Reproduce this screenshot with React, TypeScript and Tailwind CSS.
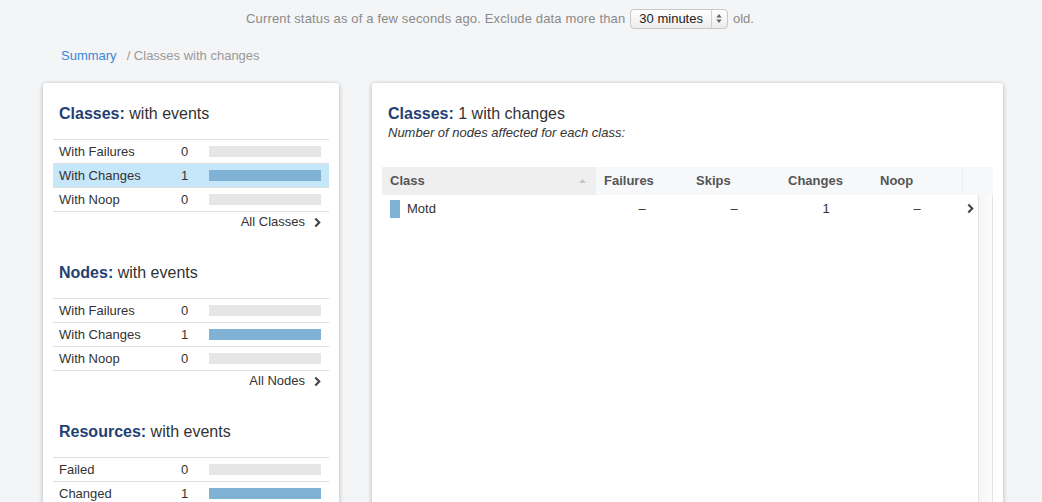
const font = { fontFamily: '"Liberation Sans", Arial, sans-serif' };

type Row = { label: string; count: number; active?: boolean };

const sections: { title: string; rows: Row[]; link?: string }[] = [
  {
    title: "Classes:",
    rows: [
      { label: "With Failures", count: 0 },
      { label: "With Changes", count: 1, active: true },
      { label: "With Noop", count: 0 },
    ],
    link: "All Classes",
  },
  {
    title: "Nodes:",
    rows: [
      { label: "With Failures", count: 0 },
      { label: "With Changes", count: 1 },
      { label: "With Noop", count: 0 },
    ],
    link: "All Nodes",
  },
  {
    title: "Resources:",
    rows: [
      { label: "Failed", count: 0 },
      { label: "Changed", count: 1 },
      { label: "Noop", count: 0 },
    ],
    link: "All Resources",
  },
];

function SummaryTable({ rows }: { rows: Row[] }) {
  return (
    <div className="mx-[10px] mt-[14px] border-b border-[#dedede]">
      {rows.map((row) => (
        <div
          key={row.label}
          className={`flex h-[24px] items-center border-t border-[#dedede] text-[13px] text-[#333] ${
            row.active ? "bg-[#c6e6f9]" : ""
          }`}
        >
          <span className="w-[128px] pl-[6px]">{row.label}</span>
          <span className="w-[28px]">{row.count}</span>
          <span
            className={`h-[11px] w-[112px] ${row.count > 0 ? "bg-[#7fb2d4]" : "bg-[#e6e6e6]"}`}
          />
        </div>
      ))}
    </div>
  );
}

function Chevron({ className }: { className?: string }) {
  return (
    <svg viewBox="0 0 8 12" className={className} fill="none">
      <path d="M1.5 1.5 6 6l-4.5 4.5" stroke="#444" strokeWidth="2.4" />
    </svg>
  );
}

export default function App() {
  const cols = ["Failures", "Skips", "Changes", "Noop"];
  const values = ["–", "–", "1", "–"];

  return (
    <div className="h-[502px] w-[1042px] overflow-hidden bg-[#f4f5f7]" style={font}>
      <div className="flex h-[37px] items-center justify-center pr-[42px] text-[13px] text-[#8a8a8a]">
        <span className="tracking-[0.15px]">
          Current status as of a few seconds ago. Exclude data more than
        </span>
        <span className="mx-[5px] flex h-[20px] items-center rounded-[4px] border border-[#c8c8c8] bg-gradient-to-b from-white to-[#ececec] text-[#222]">
          <span className="px-[8px]">30 minutes</span>
          <span className="flex h-full w-[16px] items-center justify-center border-l border-[#d0d0d0]">
            <svg viewBox="0 0 6 10" className="h-[9px] w-[6px]">
              <path d="M3 0 6 4H0z M3 10 0 6h6z" fill="#666" />
            </svg>
          </span>
        </span>
        <span>old.</span>
      </div>

      <div className="flex h-[37px] items-center pl-[61px] text-[13px]">
        <span className="text-[#3a86d3]">Summary</span>
        <span className="ml-[10px] text-[#999]">/ Classes with changes</span>
      </div>

      <div className="mt-[9px] flex gap-[33px] pl-[43px]">
        <div className="h-[600px] w-[296px] rounded-[3px] bg-white pt-[20px] shadow-[0_1px_5px_rgba(0,0,0,0.28)]">
          {sections.map((s, i) => (
            <div key={s.title} className={i > 0 ? "mt-[30px]" : ""}>
              <div className="px-[16px] text-[16px] leading-[22px] text-[#333]">
                <span className="font-bold text-[#243f74]">{s.title}</span> with events
              </div>
              <SummaryTable rows={s.rows} />
              <div className="flex h-[20px] items-center justify-end pr-[18px] text-[13px] text-[#333]">
                {s.link}
                <Chevron className="ml-[9px] h-[11px] w-[7px]" />
              </div>
            </div>
          ))}
        </div>

        <div className="h-[600px] w-[631px] rounded-[3px] bg-white pt-[21px] shadow-[0_1px_5px_rgba(0,0,0,0.28)]">
          <div className="px-[16px] text-[16px] leading-[20px] text-[#333]">
            <span className="font-bold text-[#243f74]">Classes:</span> 1 with changes
          </div>
          <div className="px-[16px] text-[13px] italic leading-[18px] text-[#333]">
            Number of nodes affected for each class:
          </div>

          <div className="mx-[10px] mt-[25px] w-[611px]">
            <div className="flex h-[28px] items-center text-[13px] font-bold text-[#555]">
              <div className="flex h-full w-[214px] items-center justify-between bg-[#efefef] pl-[8px] pr-[10px]">
                Class
                <svg viewBox="0 0 8 5" className="h-[4px] w-[7px]">
                  <path d="M4 0 8 5H0z" fill="#c4c4c4" />
                </svg>
              </div>
              {cols.map((c, i) => (
                <div
                  key={c}
                  className={`flex h-full items-center bg-[#f7f8fa] pl-[8px] ${i === 3 ? "w-[90px]" : "w-[92px]"}`}
                >
                  {c}
                </div>
              ))}
              <div className="h-full w-[31px] border-l border-[#eeeff1] bg-[#f7f8fa]" />
            </div>

            <div className="flex">
              <div className="flex-1">
                <div className="flex h-[27px] items-center text-[13px] text-[#333]">
                  <div className="flex w-[214px] items-center pl-[8px]">
                    <span className="h-[18px] w-[10px] bg-[#7fb2d4]" />
                    <span className="ml-[7px]">Motd</span>
                  </div>
                  {values.map((v, i) => (
                    <div
                      key={i}
                      className={`text-center ${i === 3 ? "w-[90px]" : "w-[92px]"}`}
                    >
                      {v}
                    </div>
                  ))}
                  <div className="flex pl-[5px]">
                    <Chevron className="h-[11px] w-[7px]" />
                  </div>
                </div>
              </div>
              <div className="h-[400px] w-[15px] border-x border-[#e4e4e4] bg-gradient-to-r from-[#f6f6f6] to-[#fbfbfb]" />
            </div>
          </div>
        </div>
      </div>
    </div>
  );
}
